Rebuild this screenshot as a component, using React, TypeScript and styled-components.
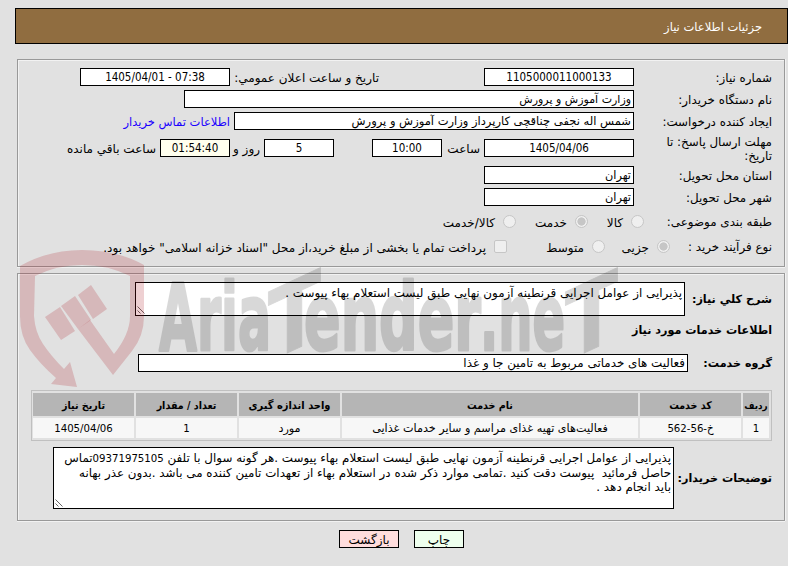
import React from 'react';
import styled, { createGlobalStyle } from 'styled-components';

const GlobalStyle = createGlobalStyle`
  * {
    box-sizing: border-box;
  }
  body {
    margin: 0;
    background: #e1e1e1;
    color: #000;
    font-family: 'DejaVu Sans', sans-serif;
    font-size: 12px;
  }
`;

const Page = styled.div`
  position: relative;
  direction: rtl;
  width: 788px;
  height: 566px;
  overflow: hidden;
  padding: 8px 0 0;
`;

const Header = styled.header`
  display: flex;
  align-items: center;
  height: 36px;
  margin: 0 0 15px 15px;
  padding: 2px 25px 0 0;
  border: 1px solid #000;
  background: #906d40;
  color: #fff;
  font-size: 11.5px;
`;

const Panel = styled.section<{ $height: number }>`
  display: flex;
  flex-direction: column;
  height: ${({ $height }) => $height}px;
  margin: 0 3px 6px 17px;
  padding: 8px 12px 0;
  border: 1px solid #999;
  box-shadow: 0 1px #f2f2f2, 1px 0 #f2f2f2, inset 1px 1px #f2f2f2;
`;

const Row = styled.div<{ $height?: number; $gap?: number }>`
  display: flex;
  flex: none;
  align-items: center;
  height: ${({ $height = 18 }) => $height}px;
  margin-bottom: ${({ $gap = 4 }) => $gap}px;
  white-space: nowrap;
`;

const Label = styled.div<{ $width?: number; $bold?: boolean }>`
  flex: none;
  width: ${({ $width = 138 }) => $width}px;
  padding-top: 1px;
  font-size: ${({ $bold }) => ($bold ? 11.2 : 11.9)}px;
  font-weight: ${({ $bold }) => ($bold ? 'bold' : 'normal')};
  line-height: 14px;
`;

const Field = styled.div<{ $width: number; $size?: number }>`
  flex: none;
  width: ${({ $width }) => $width}px;
  height: 18px;
  padding: 0 2px;
  border: 1px solid #000;
  background: #fff;
  font-size: ${({ $size = 11.9 }) => $size}px;
  line-height: 17px;
  white-space: nowrap;
`;

const NumberField = styled(Field)<{ $bg?: string }>`
  background: ${({ $bg = '#fff' }) => $bg};
  font-family: 'DejaVu Sans Condensed', 'DejaVu Sans', sans-serif;
  font-size: 11.5px;
  line-height: 17px;
  text-align: center;
`;

const Digits = styled.span`
  font-family: 'DejaVu Sans Condensed', 'DejaVu Sans', sans-serif;
  font-size: 11.3px;
`;

const Caption = styled.div<{ $width: number; $before?: number }>`
  flex: none;
  width: ${({ $width }) => $width}px;
  margin-right: ${({ $before = 4 }) => $before}px;
  padding-top: 1px;
`;

const ContactLink = styled(Caption)`
  color: #1a00ff;
  font-size: 11.5px;
`;

const Spacer = styled.div<{ $width: number }>`
  flex: none;
  width: ${({ $width }) => $width}px;
`;

const Radio = styled.span<{ $checked?: boolean }>`
  flex: none;
  width: 13px;
  height: 13px;
  border: 1px solid #c6c6c6;
  border-radius: 50%;
  background: ${({ $checked }) =>
    $checked
      ? 'radial-gradient(circle, #c6c6c6 0 3.8px, #efefef 4.4px)'
      : '#efefef'};
`;

const Checkbox = styled.span`
  flex: none;
  width: 13px;
  height: 13px;
  border: 1px solid #c6c6c6;
  border-radius: 2px;
  background: #efefef;
`;

const OptionText = styled.span<{ $width: number }>`
  flex: none;
  width: ${({ $width }) => $width}px;
  margin-right: 8px;
  margin-left: 1px;
  padding-top: 4px;
`;

const TextBox = styled.div<{ $width: number; $height: number }>`
  position: relative;
  flex: none;
  width: ${({ $width }) => $width}px;
  height: ${({ $height }) => $height}px;
  padding: 3px 2px;
  border: 1px solid #000;
  background: #fff;
  font-size: 11.9px;
  line-height: 14px;
  white-space: pre;
`;

const Grip = styled.svg`
  position: absolute;
  left: 1px;
  bottom: 1px;
`;

const Table = styled.div`
  display: grid;
  flex: none;
  grid-template-columns: 26px 101px 296px 101px 101px 101px;
  grid-template-rows: 23px 20px;
  gap: 2px;
  width: 741px;
  height: 51px;
  margin: 0 0 6px;
  padding: 2px;
  border: 1px solid #c0c0c0;
`;

const Th = styled.div<{ $size?: number }>`
  background: #b5b5b5;
  font-family: 'DejaVu Sans Condensed', 'DejaVu Sans', sans-serif;
  font-weight: bold;
  font-size: ${({ $size = 10.6 }) => $size}px;
  line-height: 25px;
  text-align: center;
  white-space: nowrap;
`;

const Td = styled.div`
  background: #f7f7f7;
  font-size: 11.2px;
  line-height: 22px;
  text-align: center;
  white-space: nowrap;
`;

const Actions = styled.footer`
  display: flex;
  gap: 15px;
  padding: 3px 324px 0 0;
`;

const Button = styled.button<{ $width: number; $bg: string }>`
  width: ${({ $width }) => $width}px;
  height: 18px;
  padding: 0;
  border: 1px solid #000;
  background: ${({ $bg }) => $bg};
  color: #000;
  font: inherit;
  line-height: 18px;
`;

const WatermarkSvg = styled.svg`
  position: absolute;
  left: 0;
  top: 240px;
  pointer-events: none;
  font-family: 'DejaVu Sans', sans-serif;
  font-weight: bold;
`;

const ResizeGrip = () => (
  <Grip width="8" height="8" viewBox="0 0 8 8">
    <path d="M0.5 0.5 L7.5 7.5 M0.5 4.5 L3.5 7.5" stroke="#555" strokeWidth="0.9" />
  </Grip>
);

const words: [string, number, number][] = [
  ['Aria', 159, 112],
  ['ender', 304, 177],
  ['.ne', 480, 85],
];

const Watermark = () => (
  <WatermarkSvg width="788" height="155" viewBox="0 0 788 155" direction="ltr">
    <g fill="rgb(170,20,30)" fillOpacity="0.2">
      <path d="M20 26 Q48 10 82 10 Q117 10 144 25 L144 76 Q144 96 132 111 L113 135 L78 89 L90 80 L114 114 Q130 94 130 76 L130 36 Q108 25 82 25 Q57 25 35 36 L34 76 Q35 92 43 104 Q51 116 64 129 L70 122 L77 147 L51 144 L56 138 Q40 124 30 110 Q20 96 20 76 Z" />
      <path d="M45 77 L60 67 L75 91 L61 100 Z" />
      <path d="M61 66 L75 56 L91 80 L78 89 Z" />
      <path d="M78 55 L91 45 L107 69 L93 79 Z" />
    </g>
    <g opacity="0.15" fill="#000" stroke="#000" strokeWidth="3" strokeLinejoin="round">
      {words.map(([word, x, width]) => (
        <text
          key={word}
          x={x}
          y="110"
          fontSize="92"
          textLength={width}
          lengthAdjust="spacingAndGlyphs"
        >
          {word}
        </text>
      ))}
      <text transform="translate(268 122) skewY(-25)" fontSize="96" textLength="53" lengthAdjust="spacingAndGlyphs" strokeWidth="1">T</text>
      <text transform="translate(565 122) skewY(-25)" fontSize="96" textLength="53" lengthAdjust="spacingAndGlyphs" strokeWidth="1">T</text>
    </g>
  </WatermarkSvg>
);

const App = () => {
  return (
    <>
      <GlobalStyle />
      <Page>
        <Header>جزئیات اطلاعات نیاز</Header>

        <Panel $height={208}>
          <Row>
            <Label>شماره نیاز:</Label>
            <NumberField $width={150}>1105000011000133</NumberField>
            <Caption $width={145} $before={105}>تاريخ و ساعت اعلان عمومي:</Caption>
            <Spacer $width={4} />
            <NumberField $width={150}>
              <bdi dir="ltr">1405/04/01 - 07:38</bdi>
            </NumberField>
          </Row>
          <Row>
            <Label>نام دستگاه خریدار:</Label>
            <Field $width={450} $size={11}>وزارت آموزش و پرورش</Field>
          </Row>
          <Row>
            <Label>ایجاد کننده درخواست:</Label>
            <Field $width={400} $size={11.5}>شمس اله نجفی چناقچی کارپرداز وزارت آموزش و پرورش</Field>
            <ContactLink $width={106}>اطلاعات تماس خریدار</ContactLink>
          </Row>
          <Row $height={28}>
            <Label>
              مهلت ارسال پاسخ: تا
              <br />
              تاریخ:
            </Label>
            <NumberField $width={150}>1405/04/06</NumberField>
            <Caption $width={34}>ساعت</Caption>
            <Spacer $width={4} />
            <NumberField $width={70}>10:00</NumberField>
            <Spacer $width={38} />
            <NumberField $width={70}>5</NumberField>
            <Caption $width={26}>روز و</Caption>
            <Spacer $width={4} />
            <NumberField $width={70} $bg="#ffffee">01:54:40</NumberField>
            <Caption $width={92}>ساعت باقي مانده</Caption>
          </Row>
          <Row>
            <Label>استان محل تحویل:</Label>
            <Field $width={150} $size={11.3}>تهران</Field>
          </Row>
          <Row>
            <Label>شهر محل تحویل:</Label>
            <Field $width={150} $size={11.3}>تهران</Field>
          </Row>
          <Row $height={22} $gap={3}>
            <Label $width={128}>طبقه بندی موضوعی:</Label>
            <Radio />
            <OptionText $width={34}>کالا</OptionText>
            <Radio $checked />
            <OptionText $width={50}>خدمت</OptionText>
            <Radio />
            <OptionText $width={60}>کالا/خدمت</OptionText>
          </Row>
          <Row $height={22}>
            <Label $width={102}>نوع فرآیند خرید :</Label>
            <Radio $checked />
            <OptionText $width={43}>جزیی</OptionText>
            <Radio />
            <OptionText $width={76}>متوسط</OptionText>
            <Checkbox />
            <OptionText $width={386}>
              پرداخت تمام یا بخشی از مبلغ خرید،از محل "اسناد خزانه اسلامی" خواهد بود.
            </OptionText>
          </Row>
        </Panel>

        <Panel $height={248}>
          <Row $height={34} $gap={5}>
            <Label $width={87} $bold>شرح کلي نیاز:</Label>
            <TextBox $width={550} $height={34}>
              پذیرایی از عوامل اجرایی قرنطینه آزمون نهایی طبق لیست استعلام بهاء پیوست .
              <ResizeGrip />
            </TextBox>
          </Row>
          <Row $gap={15}>
            <Label $bold>اطلاعات خدمات مورد نیاز</Label>
          </Row>
          <Row $gap={18}>
            <Label $width={84} $bold>گروه خدمت:</Label>
            <Field $width={550}>فعالیت های خدماتی مربوط به تامین جا و غذا</Field>
          </Row>
          <Table>
            <Th $size={9.8}>ردیف</Th>
            <Th>کد خدمت</Th>
            <Th>نام خدمت</Th>
            <Th $size={11}>واحد اندازه گیری</Th>
            <Th>تعداد / مقدار</Th>
            <Th>تاریخ نیاز</Th>
            <Td><Digits>1</Digits></Td>
            <Td><Digits as="bdi" dir="ltr">562-56-خ</Digits></Td>
            <Td>فعالیت‌های تهیه غذای مراسم و سایر خدمات غذایی</Td>
            <Td>مورد</Td>
            <Td><Digits>1</Digits></Td>
            <Td><Digits>1405/04/06</Digits></Td>
          </Table>
          <Row $height={62}>
            <Label $width={98} $bold>توضیحات خریدار:</Label>
            <TextBox $width={621} $height={62}>
              پذیرایی از عوامل اجرایی قرنطینه آزمون نهایی طبق لیست استعلام بهاء پیوست .هر گونه سوال با تلفن{' '}
              <Digits>09371975105</Digits>تماس
              <br />
              {'حاصل فرمائید  پیوست دقت کنید .تمامی موارد ذکر شده در استعلام بهاء از تعهدات تامین کننده می باشد .بدون عذر بهانه'}
              <br />
              باید انجام دهد .
              <ResizeGrip />
            </TextBox>
          </Row>
        </Panel>

        <Actions>
          <Button $width={50} $bg="#eeffee">چاپ</Button>
          <Button $width={60} $bg="#ffdddd">بازگشت</Button>
        </Actions>
        <Watermark />
      </Page>
    </>
  );
};

export default App;
